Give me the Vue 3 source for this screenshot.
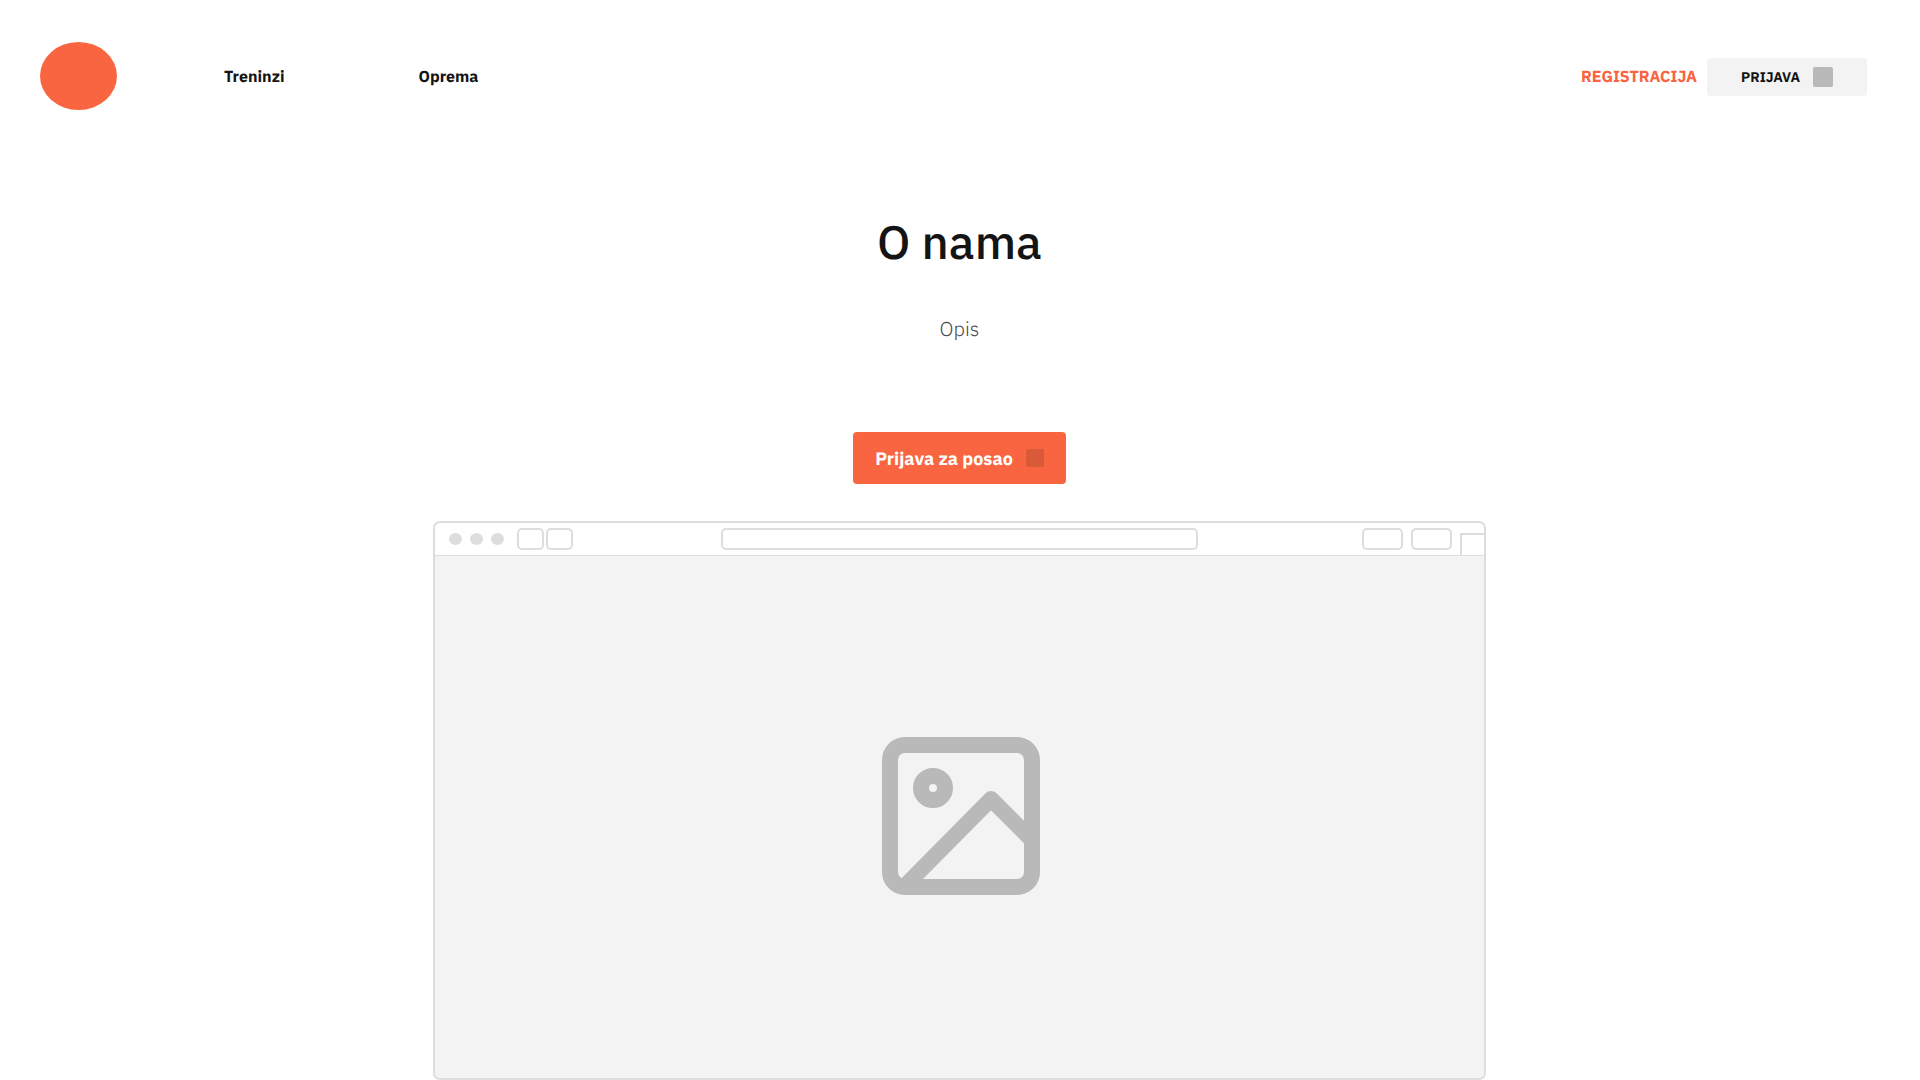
<script setup>
const links = ['Treninzi', 'Oprema']
</script>

<template>
  <div class="page">
    <header class="header">
      <a class="logo" href="#" aria-label="Početna"></a>
      <nav class="nav">
        <a v-for="link in links" :key="link" class="nav-link" href="#">{{ link }}</a>
      </nav>
      <div class="account">
        <a class="register" href="#">REGISTRACIJA</a>
        <button class="login" type="button">PRIJAVA<span class="login-icon"></span></button>
      </div>
    </header>

    <main class="main">
      <h1 class="title">O nama</h1>
      <p class="description">Opis</p>
      <button class="cta" type="button">Prijava za posao<span class="cta-icon"></span></button>

      <div class="browser" aria-hidden="true">
        <div class="toolbar">
          <div class="tools-left">
            <span class="dot"></span>
            <span class="dot"></span>
            <span class="dot"></span>
            <div class="history">
              <span class="box step"></span>
              <span class="box step"></span>
            </div>
          </div>
          <span class="box address"></span>
          <div class="tools-right">
            <span class="box action"></span>
            <span class="box action"></span>
            <span class="tab"></span>
          </div>
        </div>
        <div class="viewport">
          <svg class="picture" width="158" height="158" viewBox="0 0 158 158" fill="none" stroke="#b9b9b9" stroke-width="16">
            <rect x="8" y="8" width="142" height="142" rx="15" />
            <circle cx="51" cy="51" r="12" />
            <path d="M22 150 L109 62 L150 103" stroke-linejoin="round" />
          </svg>
        </div>
      </div>
    </main>
  </div>
</template>

<style>
body {
  margin: 0;
  background: #fff;
}
</style>

<style scoped>
.page {
  font-family: "IBM Plex Sans", "Noto Sans", sans-serif;
  color: #141414;
  text-rendering: geometricPrecision;
}

.page * {
  box-sizing: border-box;
}

.header {
  display: flex;
  align-items: center;
  min-height: 112px;
  padding: 42px 53px 0 40px;
}

.logo {
  align-self: flex-start;
  width: 77px;
  height: 68px;
  border-radius: 50%;
  background: #f86540;
}

.nav {
  display: flex;
  gap: 134px;
  margin-left: 107px;
}

.nav-link {
  color: inherit;
  font-size: 16px;
  font-weight: 700;
  line-height: 25px;
  text-decoration: none;
}

.account {
  display: flex;
  align-items: center;
  gap: 10px;
  margin-left: auto;
}

.register {
  color: #f86540;
  font-size: 16px;
  font-weight: 700;
  line-height: 25px;
  text-decoration: none;
}

.login,
.cta {
  display: flex;
  align-items: center;
  justify-content: center;
  gap: 13px;
  padding: 0;
  border: 0;
  border-radius: 4px;
  font-family: inherit;
  text-rendering: inherit;
  cursor: pointer;
}

.login {
  width: 160px;
  height: 38px;
  background: #f3f3f3;
  color: #141414;
  font-size: 14px;
  font-weight: 700;
}

.login-icon {
  width: 20px;
  height: 20px;
  border-radius: 2px;
  background: #b9b9b9;
}

.main {
  display: flex;
  flex-direction: column;
  align-items: center;
  padding-right: 1px;
}

.title {
  margin: 98px 0 0;
  font-size: 47px;
  font-weight: 500;
  line-height: 64px;
}

.description {
  margin: 41px 0 0;
  color: #484848;
  font-size: 20px;
  font-weight: 300;
  line-height: 28px;
}

.cta {
  width: 213px;
  height: 52px;
  margin-top: 89px;
  background: #f86540;
  color: #fff;
  font-size: 18px;
  font-weight: 700;
}

.cta-icon {
  width: 18px;
  height: 18px;
  border-radius: 2px;
  background: #d95a39;
}

.browser {
  width: 100%;
  max-width: 1053px;
  margin-top: 37px;
  border: 2px solid #dddddd;
  border-radius: 7px;
  overflow: hidden;
}

.toolbar {
  display: grid;
  grid-template-columns: 1fr 477px 1fr;
  align-items: center;
  height: 33px;
  border-bottom: 1px solid #dddddd;
}

.tools-left {
  display: flex;
  align-items: center;
  gap: 8px;
  padding-left: 14px;
}

.dot {
  width: 13px;
  height: 12px;
  border-radius: 50%;
  background: #dddddd;
}

.history {
  display: flex;
  gap: 2px;
  margin-left: 5px;
}

.box {
  height: 22px;
  border: 2px solid #dddddd;
  border-radius: 5px;
}

.step {
  width: 27px;
}

.tools-right {
  display: flex;
  align-items: center;
  justify-content: flex-end;
  align-self: stretch;
  gap: 8px;
}

.action {
  width: 41px;
}

.tab {
  align-self: flex-end;
  width: 24px;
  height: 22px;
  border: solid #dddddd;
  border-width: 2px 0 0 2px;
}

.viewport {
  display: flex;
  align-items: center;
  justify-content: center;
  min-height: 522px;
  padding: 0 0 2px 3px;
  background: #f3f3f3;
}

.picture {
  display: block;
}
</style>
